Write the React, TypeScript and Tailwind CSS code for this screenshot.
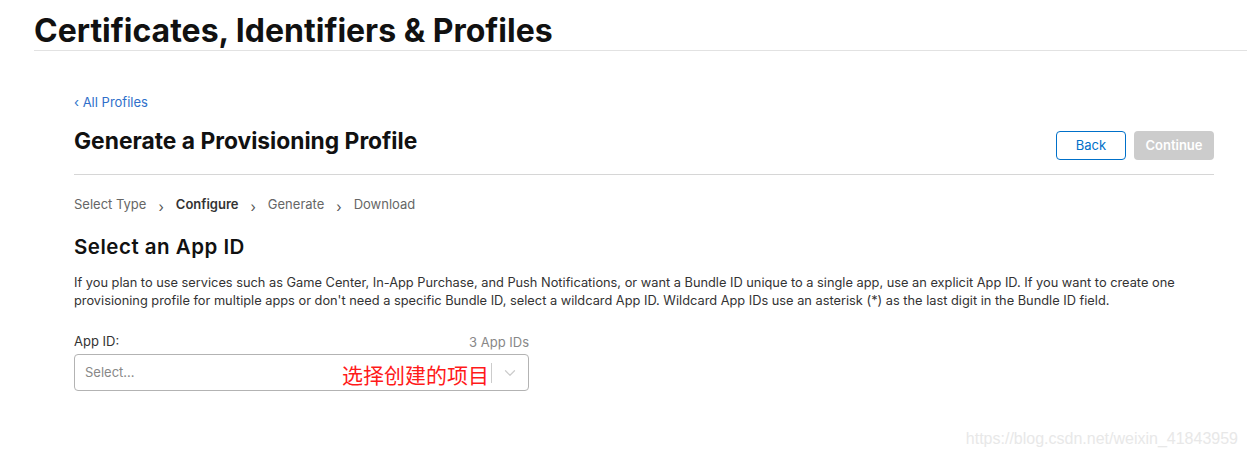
import { ChevronDown } from 'lucide-react';

const font = { fontFamily: 'Inter, "Noto Sans CJK SC", sans-serif' };

function Steps() {
  const steps = ['Select Type', 'Configure', 'Generate', 'Download'];
  return (
    <div className="flex items-center text-[13px] text-[#666]">
      {steps.map((s, i) => (
        <div key={s} className="flex items-center">
          {i > 0 && <span className="mx-[12px] mt-[3px] text-[14px] text-[#555]">&#8250;</span>}
          <span className={i === 1 ? 'font-semibold text-[#333]' : ''}>{s}</span>
        </div>
      ))}
    </div>
  );
}

export default function App() {
  return (
    <div className="relative h-[457px] w-[1247px] overflow-hidden bg-white text-[#111]" style={font}>
      {/* Page header */}
      <div className="ml-[34px] border-b border-[#e2e2e2] pt-[13px] pb-[1px]">
        <h1 className="text-[32px] font-bold leading-[36px] text-[#111]">
          Certificates, Identifiers &amp; Profiles
        </h1>
      </div>

      <div className="mx-[74px] mr-[33px] pt-[38px]">
        <a className="text-[13px] leading-[16px] text-[#2f6fca]">&lsaquo; All Profiles</a>

        <div className="mt-[14px] flex items-start justify-between border-b border-[#d6d6d6] pb-[14px]">
          <h2 className="mt-[1px] text-[22.8px] font-bold leading-[26px] text-[#111]">
            Generate a Provisioning Profile
          </h2>
          <div className="mt-[4px] flex gap-[8px]">
            <button className="h-[29px] w-[70px] rounded-[4px] border border-[#0070c9] text-[13px] text-[#0070c9]">
              Back
            </button>
            <button className="h-[29px] w-[80px] rounded-[4px] bg-[#cccccc] text-[13px] font-semibold text-white">
              Continue
            </button>
          </div>
        </div>

        <div className="mt-[18px]">
          <Steps />
        </div>

        <h3 className="mt-[18px] text-[20.5px] font-semibold leading-[24px] tracking-[0.5px] text-[#111]">
          Select an App ID
        </h3>

        <p className="mt-[15px] w-[1130px] text-[12.8px] leading-[18px] text-[#333]">
          If you plan to use services such as Game Center, In-App Purchase, and Push Notifications, or want a Bundle ID
          unique to a single app, use an explicit App ID. If you want to create one provisioning profile for multiple apps
          or don't need a specific Bundle ID, select a wildcard App ID. Wildcard App IDs use an asterisk (*) as the last
          digit in the Bundle ID field.
        </p>

        <div className="mt-[23px] w-[455px]">
          <div className="flex items-end justify-between">
            <span className="text-[13px] leading-[16px] text-[#333]">App ID:</span>
            <span className="text-[13px] leading-[14px] text-[#888]">3 App IDs</span>
          </div>
          <div className="relative mt-[5px] flex h-[37px] items-center rounded-[4px] border border-[#b3b3b3]">
            <span className="flex-1 pl-[10px] text-[13px] text-[#888]">Select...</span>
            <div className="h-[20px] w-px bg-[#ccc]" />
            <div className="flex w-[36px] items-center justify-center text-[#ccc]">
              <ChevronDown size={18} strokeWidth={1.6} />
            </div>
            <span className="absolute left-[267px] top-[9px] text-[21px] leading-[24px] text-[#ff1a1a]">
              选择创建的项目
            </span>
          </div>
        </div>
      </div>

      <div
        className="absolute right-[9px] top-[427px] text-[16px] text-[#e8e8e8]"
        style={{ fontFamily: '"Liberation Sans", sans-serif' }}
      >
        https://blog.csdn.net/weixin_41843959
      </div>
    </div>
  );
}
